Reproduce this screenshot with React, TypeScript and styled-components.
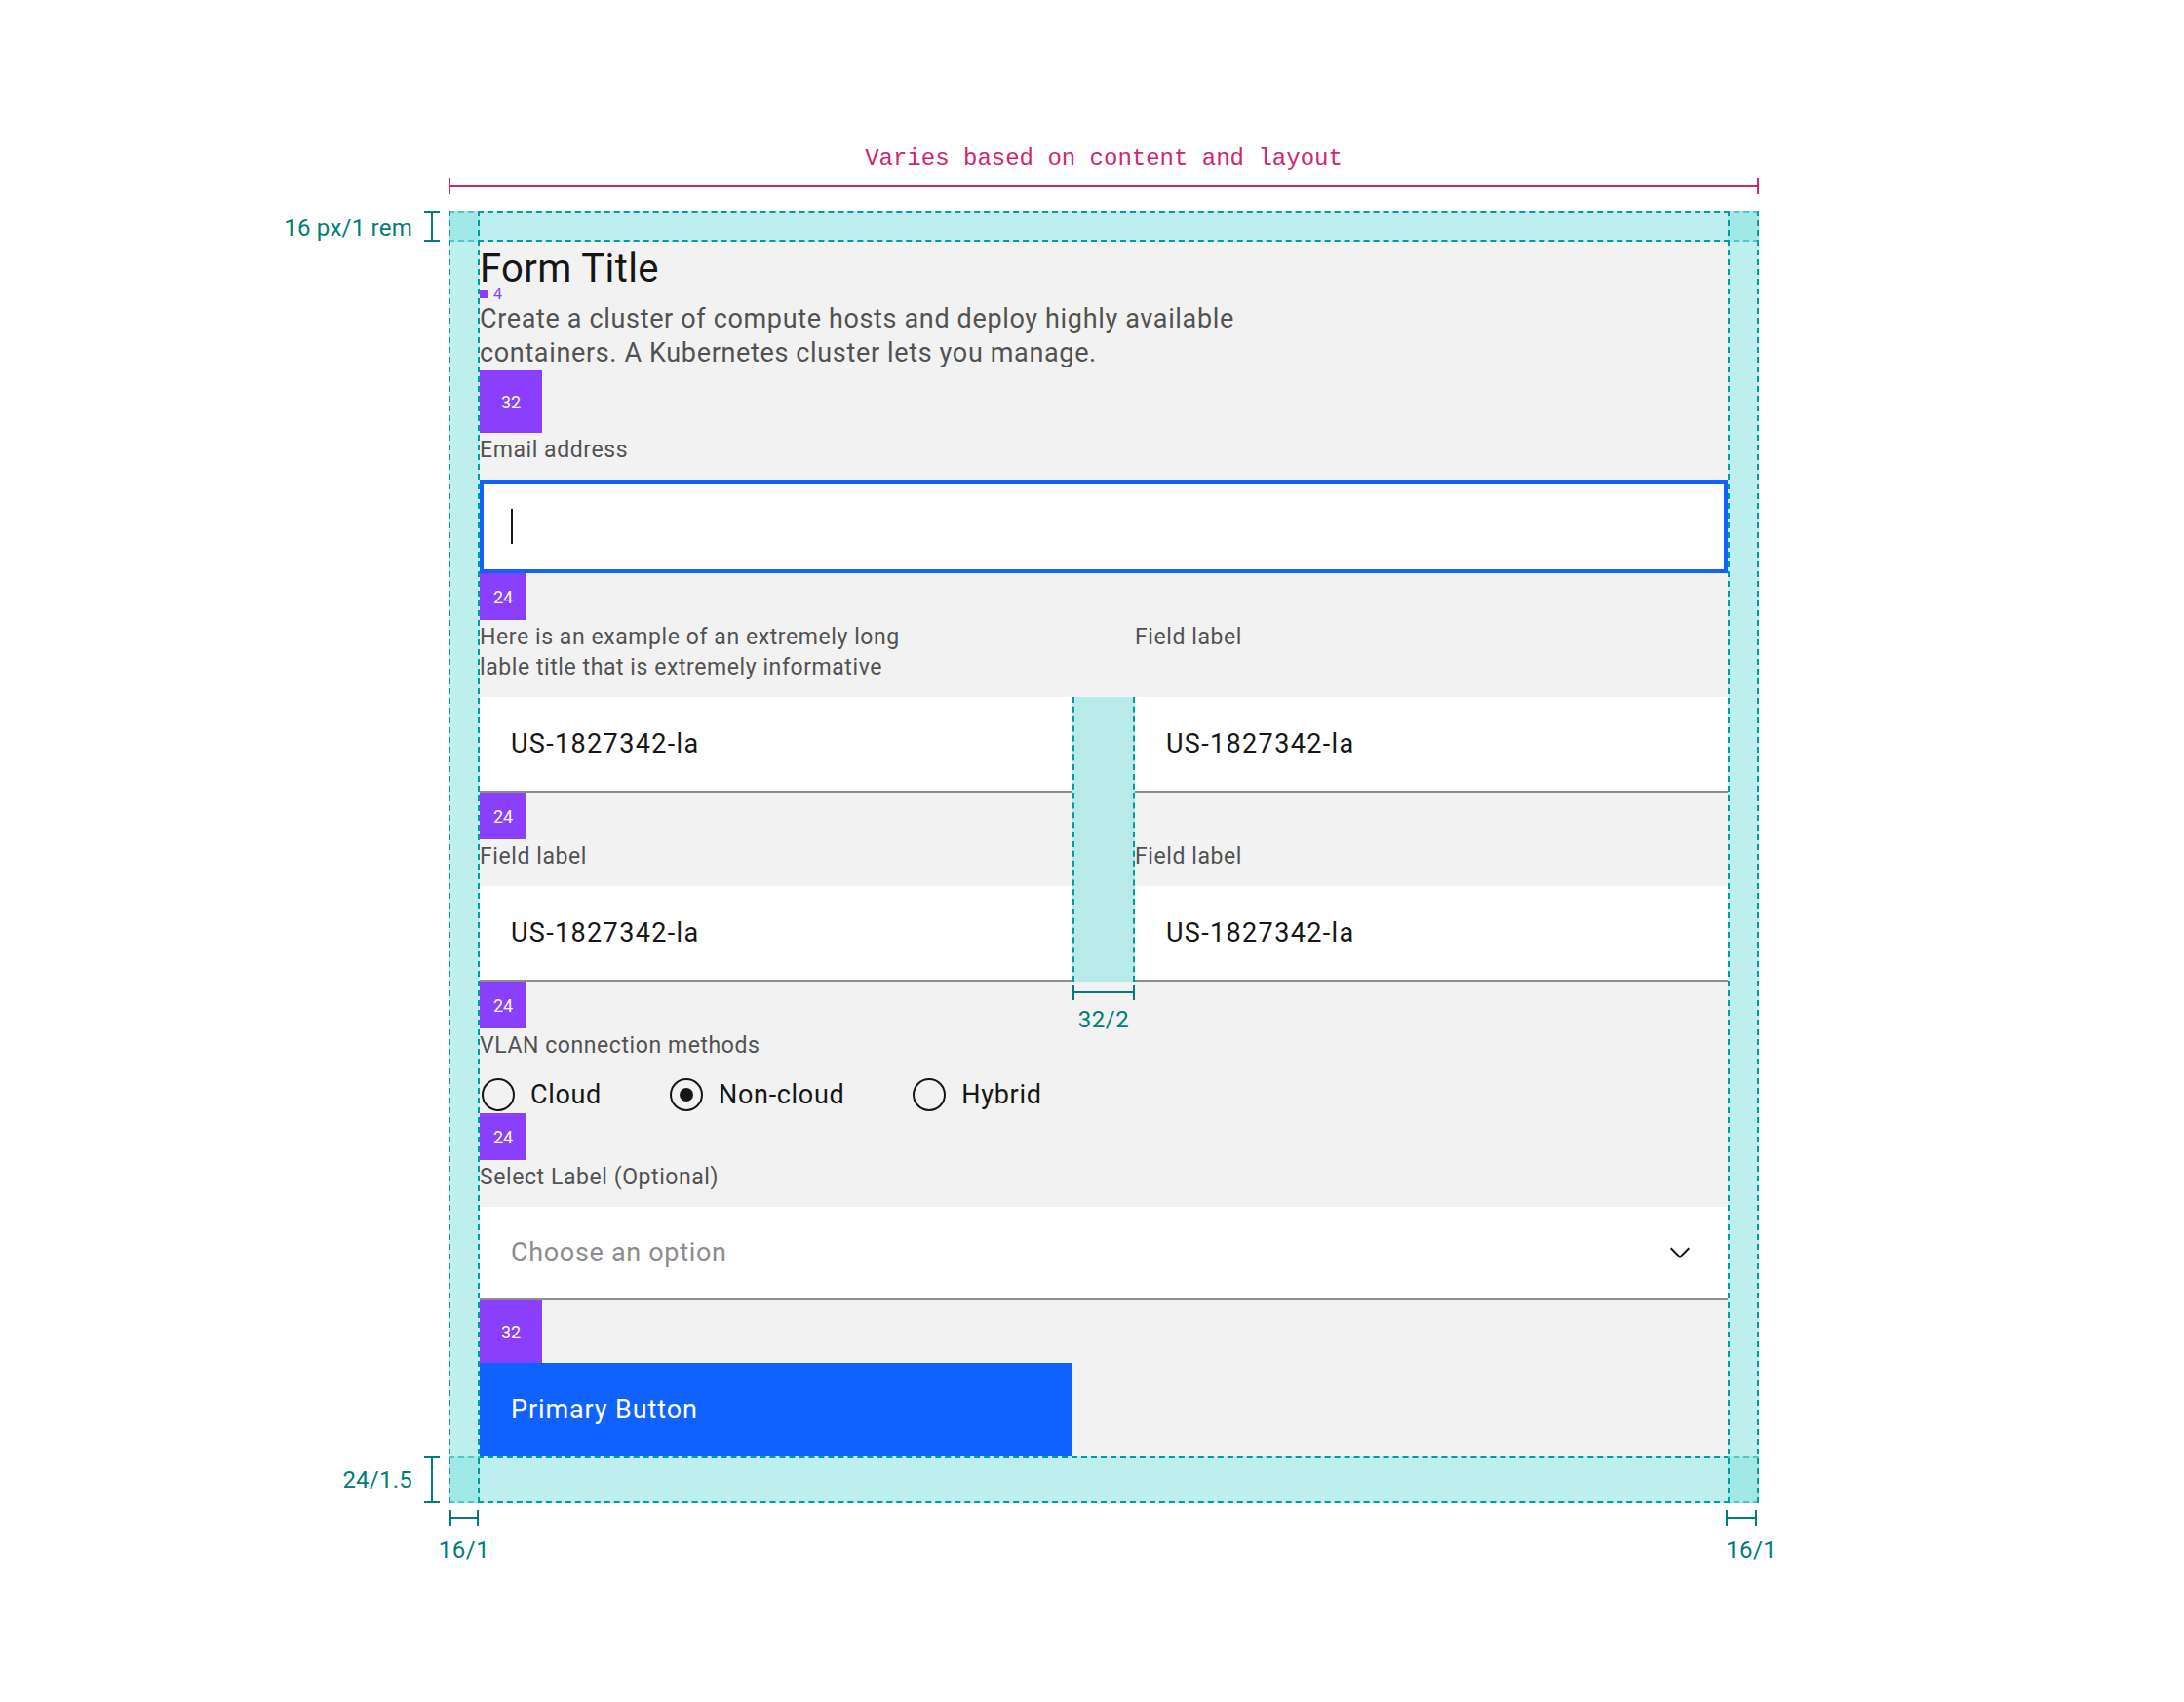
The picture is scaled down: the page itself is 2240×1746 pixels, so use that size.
import React from "react";
import styled, { createGlobalStyle, css } from "styled-components";

const C = {
  teal: "#007d79",
  tealLine: "#009d9a",
  band: "rgba(140, 227, 227, 0.576)",
  magenta: "#d02670",
  purple: "#8a3ffc",
  panel: "#f2f2f2",
  text: "#161616",
  label: "#525252",
  placeholder: "#8d8d8d",
  rule: "#8d8d8d",
  blue: "#0f62fe",
};

const GlobalStyle = createGlobalStyle`
  html, body { margin: 0; padding: 0; background: #ffffff; }
  body {
    font-family: Roboto, "Liberation Sans", Arial, sans-serif;
    -webkit-font-smoothing: antialiased;
  }
  *, *::before, *::after { box-sizing: border-box; }
`;

/* ---------- diagram grid ---------- */

const Diagram = styled.div`
  display: grid;
  grid-template-columns: 460px 32px 1280px 32px;
  grid-template-rows: 216px 32px auto 48px auto;
`;

const WidthNote = styled.div`
  grid-column: 2 / 5;
  grid-row: 1;
  display: flex;
  flex-direction: column;
  justify-content: flex-end;
  padding-bottom: 17px;
  color: ${C.magenta};
`;

const WidthText = styled.div`
  font-family: "Liberation Mono", "DejaVu Sans Mono", monospace;
  font-size: 24px;
  line-height: 28px;
  text-align: center;
  margin-bottom: 6px;
`;

const Bracket = styled.span<{ $w?: number }>`
  width: ${(p) => (p.$w ? `${p.$w}px` : "100%")};
  height: 16px;
  flex: none;
  display: flex;
  align-items: center;
  border-left: 2px solid currentColor;
  border-right: 2px solid currentColor;
`;

const BarLine = styled.span`
  flex: 1;
  height: 2px;
  background: currentColor;
`;

const SideNote = styled.div<{ $row: number }>`
  grid-column: 1;
  grid-row: ${(p) => p.$row};
  display: flex;
  align-items: center;
  justify-content: flex-end;
  gap: 12px;
  padding-right: 9px;
  color: ${C.teal};
  font-size: 24px;
  line-height: 28px;
  letter-spacing: 0.01em;
  white-space: nowrap;
`;

const SideText = styled.span<{ $shift?: number }>`
  padding-top: ${(p) => p.$shift ?? 0}px;
`;

const IBeam = styled.span`
  width: 16px;
  align-self: stretch;
  display: flex;
  flex-direction: column;
  align-items: center;
  border-top: 2px solid currentColor;
  border-bottom: 2px solid currentColor;
`;

const IBeamStem = styled.span`
  flex: 1;
  width: 2px;
  background: currentColor;
`;

const BottomNote = styled.div<{ $col: number; $start?: boolean }>`
  grid-column: ${(p) => p.$col};
  grid-row: 5;
  display: flex;
  flex-direction: column;
  align-items: ${(p) => (p.$start ? "flex-start" : "center")};
  margin-left: ${(p) => (p.$start ? "-2px" : "0")};
  padding-top: 7px;
  gap: 11px;
  color: ${C.teal};
  font-size: 24px;
  line-height: 28px;
  letter-spacing: 0.02em;
  white-space: nowrap;
`;

const BandH = styled.div<{ $row: number }>`
  grid-column: 2 / 5;
  grid-row: ${(p) => p.$row};
  background: ${C.band};
  border-top: 2px dashed ${C.tealLine};
  border-bottom: 2px dashed ${C.tealLine};
`;

const BandV = styled.div<{ $col: number }>`
  grid-column: ${(p) => p.$col};
  grid-row: 2 / 5;
  background: ${C.band};
  border-left: 2px dashed ${C.tealLine};
  border-right: 2px dashed ${C.tealLine};
`;

/* ---------- form panel ---------- */

const Panel = styled.form`
  grid-column: 3;
  grid-row: 3;
  background: ${C.panel};
  display: flex;
  flex-direction: column;
  align-items: stretch;
  margin: 0;
`;

const Title = styled.h2`
  margin: 0;
  padding-top: 5px;
  font-size: 40px;
  line-height: 45px;
  font-weight: 400;
  letter-spacing: 0.01em;
  color: ${C.text};
`;

const Spacer = styled.div<{ $px: number }>`
  width: ${(p) => p.$px}px;
  height: ${(p) => p.$px}px;
  flex: none;
  background: ${C.purple};
  color: #ffffff;
  font-size: 18px;
  display: flex;
  align-items: center;
  justify-content: center;
`;

const TinySpacerRow = styled.div`
  height: 8px;
  display: flex;
  align-items: center;
  gap: 6px;
  color: ${C.purple};
  font-size: 16px;
  line-height: 8px;
`;

const TinySquare = styled.span`
  width: 8px;
  height: 8px;
  background: ${C.purple};
`;

const Description = styled.p`
  margin: 0;
  padding-top: 4px;
  font-size: 27px;
  line-height: 35px;
  letter-spacing: 0.024em;
  color: ${C.label};
`;

const Label = styled.div`
  padding-top: 2px;
  margin-bottom: 15px;
  font-size: 23px;
  line-height: 31px;
  letter-spacing: 0.025em;
  color: ${C.label};
`;

const Field = styled.div<{ $focused?: boolean }>`
  height: 98px;
  background: #ffffff;
  display: flex;
  align-items: center;
  padding: 0 32px;
  font-size: 27px;
  letter-spacing: 0.05em;
  color: ${C.text};
  border-bottom: 2px solid ${C.rule};
  ${(p) =>
    p.$focused &&
    css`
      height: 96px;
      border: 4px solid ${C.blue};
      padding-left: 28px;
    `}
`;

const Caret = styled.span`
  width: 2px;
  height: 36px;
  background: ${C.text};
`;

const FieldGrid = styled.div`
  display: grid;
  grid-template-columns: 1fr 64px 1fr;
  grid-template-rows: auto auto 48px auto auto;
`;

const Cell = styled.div<{ $col: number; $row: number }>`
  grid-column: ${(p) => p.$col};
  grid-row: ${(p) => p.$row};
  display: flex;
  flex-direction: column;
`;

const Gutter = styled.div`
  grid-column: 2;
  grid-row: 2 / 6;
  position: relative;
  background: ${C.band};
  border-left: 2px dashed ${C.tealLine};
  border-right: 2px dashed ${C.tealLine};
`;

const GutterNote = styled.div`
  position: absolute;
  top: 100%;
  left: -2px;
  right: -2px;
  padding-top: 3px;
  display: flex;
  flex-direction: column;
  align-items: center;
  gap: 6px;
  color: ${C.teal};
  font-size: 24px;
  line-height: 28px;
  letter-spacing: 0.02em;
`;

const RadioRow = styled.div`
  height: 39px;
  display: flex;
  align-items: center;
  gap: 68px;
`;

const RadioItem = styled.div`
  display: flex;
  align-items: center;
  gap: 14px;
  font-size: 27px;
  letter-spacing: 0.025em;
  color: ${C.text};
`;

const RadioCircle = styled.span<{ $checked?: boolean }>`
  width: 34px;
  height: 34px;
  margin: 0 2px;
  border: 2px solid ${C.text};
  border-radius: 50%;
  display: flex;
  align-items: center;
  justify-content: center;
  &::after {
    content: "";
    width: 14px;
    height: 14px;
    border-radius: 50%;
    background: ${(p) => (p.$checked ? C.text : "transparent")};
  }
`;

const SelectBox = styled.div`
  height: 96px;
  background: #ffffff;
  border-bottom: 2px solid ${C.rule};
  display: flex;
  align-items: center;
  justify-content: space-between;
  padding: 0 33px 0 32px;
  font-size: 27px;
  letter-spacing: 0.025em;
  color: ${C.placeholder};
`;

const PrimaryButton = styled.button`
  width: 608px;
  height: 96px;
  border: 0;
  margin: 0;
  padding: 0 32px;
  background: ${C.blue};
  color: #ffffff;
  font-family: inherit;
  font-size: 27px;
  letter-spacing: 0.033em;
  text-align: left;
  cursor: pointer;
`;

const Chevron = () => (
  <svg width="32" height="32" viewBox="0 0 16 16" aria-hidden="true">
    <path d="M8 11L3 6l.7-.7L8 9.6l4.3-4.3L13 6z" fill={C.text} />
  </svg>
);

const Radio = ({ label, checked }: { label: string; checked?: boolean }) => (
  <RadioItem>
    <RadioCircle $checked={checked} />
    {label}
  </RadioItem>
);

export default function App() {
  return (
    <>
      <GlobalStyle />
      <Diagram>
        <WidthNote>
          <WidthText>Varies based on content and layout</WidthText>
          <Bracket>
            <BarLine />
          </Bracket>
        </WidthNote>

        <SideNote $row={2}>
          <SideText $shift={4}>16 px/1 rem</SideText>
          <IBeam>
            <IBeamStem />
          </IBeam>
        </SideNote>
        <SideNote $row={4}>
          <SideText>24/1.5</SideText>
          <IBeam>
            <IBeamStem />
          </IBeam>
        </SideNote>

        <BandH $row={2} />
        <BandH $row={4} />
        <BandV $col={2} />
        <BandV $col={4} />

        <Panel onSubmit={(e) => e.preventDefault()}>
          <Title>Form Title</Title>
          <TinySpacerRow>
            <TinySquare />4
          </TinySpacerRow>
          <Description>
            Create a cluster of compute hosts and deploy highly available
            <br />
            containers. A Kubernetes cluster lets you manage.
          </Description>
          <Spacer $px={64}>32</Spacer>

          <Label>Email address</Label>
          <Field $focused>
            <Caret />
          </Field>
          <Spacer $px={48}>24</Spacer>

          <FieldGrid>
            <Cell $col={1} $row={1}>
              <Label>
                Here is an example of an extremely long
                <br />
                lable title that is extremely informative
              </Label>
            </Cell>
            <Cell $col={3} $row={1}>
              <Label>Field label</Label>
            </Cell>
            <Cell $col={1} $row={2}>
              <Field>US-1827342-la</Field>
            </Cell>
            <Cell $col={3} $row={2}>
              <Field>US-1827342-la</Field>
            </Cell>
            <Cell $col={1} $row={3}>
              <Spacer $px={48}>24</Spacer>
            </Cell>
            <Cell $col={1} $row={4}>
              <Label>Field label</Label>
            </Cell>
            <Cell $col={3} $row={4}>
              <Label>Field label</Label>
            </Cell>
            <Cell $col={1} $row={5}>
              <Field>US-1827342-la</Field>
            </Cell>
            <Cell $col={3} $row={5}>
              <Field>US-1827342-la</Field>
            </Cell>
            <Gutter>
              <GutterNote>
                <Bracket>
                  <BarLine />
                </Bracket>
                32/2
              </GutterNote>
            </Gutter>
          </FieldGrid>
          <Spacer $px={48}>24</Spacer>

          <Label>VLAN connection methods</Label>
          <RadioRow>
            <Radio label="Cloud" />
            <Radio label="Non-cloud" checked />
            <Radio label="Hybrid" />
          </RadioRow>
          <Spacer $px={48}>24</Spacer>

          <Label>Select Label (Optional)</Label>
          <SelectBox>
            Choose an option
            <Chevron />
          </SelectBox>
          <Spacer $px={64}>32</Spacer>

          <PrimaryButton type="button">Primary Button</PrimaryButton>
        </Panel>

        <BottomNote $col={2}>
          <Bracket $w={30}>
            <BarLine />
          </Bracket>
          16/1
        </BottomNote>
        <BottomNote $col={4} $start>
          <Bracket $w={32}>
            <BarLine />
          </Bracket>
          16/1
        </BottomNote>
      </Diagram>
    </>
  );
}
